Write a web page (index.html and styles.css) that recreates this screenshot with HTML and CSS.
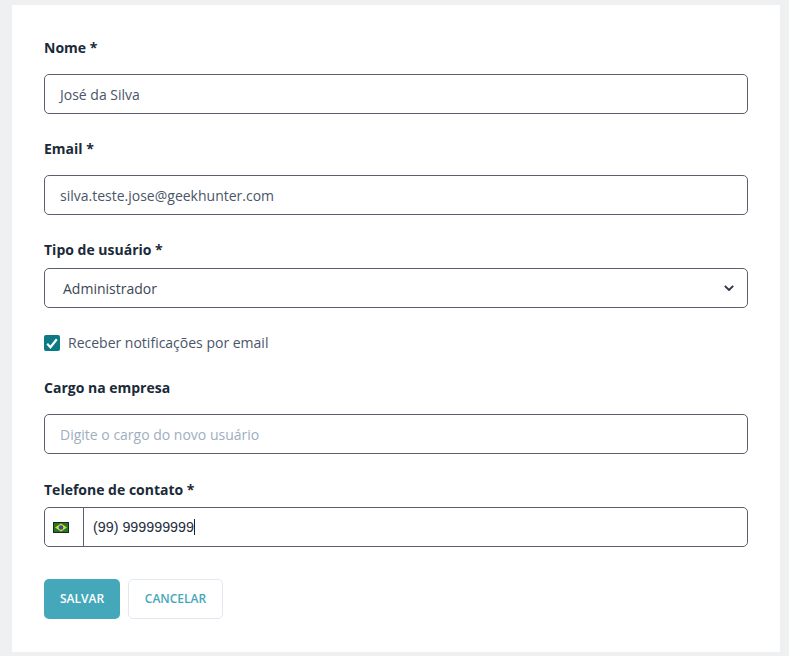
FILE: index.html
```html
<!DOCTYPE html>
<html lang="pt-BR">
<head>
<meta charset="utf-8">
<title>Novo usuário</title>
<link rel="stylesheet" href="styles.css">
</head>
<body>
<form class="card">
  <div class="field field-name">
    <label class="label label-wide">Nome *</label>
    <div class="input">José da Silva</div>
  </div>
  <div class="field field-email">
    <label class="label label-wide">Email *</label>
    <div class="input">silva.teste.jose@geekhunter.com</div>
  </div>
  <div class="field field-type">
    <label class="label label-tight">Tipo de usuário *</label>
    <div class="input select">
      <span>Administrador</span>
      <svg class="chevron" width="10" height="6" viewBox="0 0 10 6" aria-hidden="true"><path d="M.8.8L5 5l4.200-4.200" fill="none" stroke="#2d3748" stroke-width="1.9"/></svg>
    </div>
  </div>
  <div class="check-row">
    <span class="checkbox">
      <svg width="12" height="11" viewBox="0 0 12 11" aria-hidden="true"><path d="M1.200 5.800l3.200 3.400 6.400-8" fill="none" stroke="#fff" stroke-width="2.200"/></svg>
    </span>
    <span class="check-label">Receber notificações por email</span>
  </div>
  <div class="field field-role">
    <label class="label label-wide">Cargo na empresa</label>
    <div class="input placeholder">Digite o cargo do novo usuário</div>
  </div>
  <div class="field field-phone">
    <label class="label label-tight">Telefone de contato *</label>
    <div class="phone">
      <div class="flag-box">
        <svg width="16" height="11" viewBox="0 0 16 11" aria-hidden="true">
          <rect width="16" height="11" fill="#1c2a1c"/>
          <rect x="1" y="1" width="14" height="9" fill="#1d7a2a"/>
          <path d="M8 1.600L14 5.500 8 9.400 2 5.500z" fill="#e6d62f"/>
          <circle cx="8" cy="5.500" r="2.300" fill="#2f4f9f"/>
        </svg>
      </div>
      <div class="phone-value"><span>(99) 999999999</span><i class="caret"></i></div>
    </div>
  </div>
  <div class="actions">
    <button type="button" class="btn btn-primary">SALVAR</button>
    <button type="button" class="btn btn-secondary">CANCELAR</button>
  </div>
</form>
</body>
</html>
```
FILE: styles.css
```css
* { box-sizing: border-box; }
html, body { height: 100%; }
body {
  margin: 0;
  padding: 5px 9px 4px 12px;
  background: #eff0f2;
  font-family: "Open Sans", sans-serif;
  font-size: 14px;
  color: #4a5568;
}
.card {
  background: #fff;
  height: 647px;
  padding: 33px 32px 0;
  display: flex;
  flex-direction: column;
}
.label {
  display: block;
  height: 20px;
  line-height: 20px;
  font-weight: 700;
  font-size: 14px;
  color: #1a2a38;
}
.label-wide { margin-bottom: 16px; }
.label-tight { margin-bottom: 8px; }
.field-phone .label-tight { margin-bottom: 7px; }
.field-email { margin-top: 25px; }
.field-type { margin-top: 25px; }
.field-role { margin-top: 27px; }
.field-phone { margin-top: 26px; }
.input {
  height: 40px;
  border: 1px solid #5a616c;
  border-radius: 5px;
  padding: 0 15px;
  display: flex;
  align-items: center;
  color: #4a5568;
}
.placeholder { color: #a0aec0; }
.select {
  padding: 0 13px 0 18px;
  justify-content: space-between;
  color: #3c4654;
}
.check-row {
  display: flex;
  align-items: center;
  gap: 8px;
  margin-top: 27px;
  height: 16px;
}
.checkbox {
  width: 16px;
  height: 16px;
  border-radius: 2px;
  background: #0b7a85;
  display: flex;
  align-items: center;
  justify-content: center;
}
.check-label {
  line-height: 14px;
  margin-bottom: 1px;
}
.phone {
  height: 40px;
  border: 1px solid #5a616c;
  border-radius: 5px;
  display: flex;
}
.flag-box {
  width: 39px;
  padding-left: 8px;
  border-right: 1px solid #5a616c;
  display: flex;
  align-items: center;
}
.phone-value {
  display: flex;
  align-items: center;
  padding-left: 9px;
  font-family: "Liberation Sans", Arial, sans-serif;
  font-size: 14.300px;
  color: #1f2d3d;
}
.caret {
  width: 1px;
  height: 16px;
  background: #1a202c;
}
.actions {
  display: flex;
  gap: 8px;
  margin-top: 32px;
}
.btn {
  height: 40px;
  border-radius: 5px;
  font-family: "Open Sans", sans-serif;
  font-size: 12px;
  font-weight: 600;
  padding: 0 0 2px;
}
.btn-primary {
  width: 76px;
  background: #44a8ba;
  border: 0;
  color: #fff;
}
.btn-secondary {
  width: 95px;
  background: #fff;
  border: 1px solid #e2e8f0;
  color: #44a8ba;
}
```
